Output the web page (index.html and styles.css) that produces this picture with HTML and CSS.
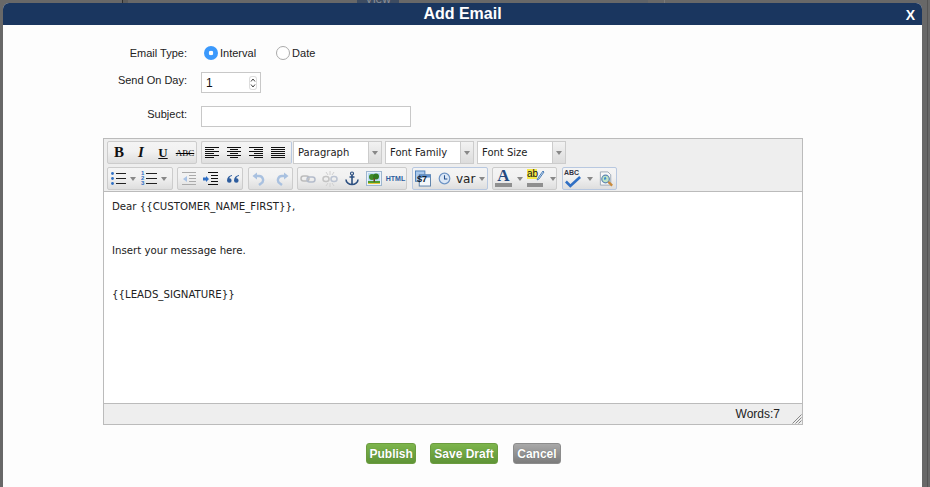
FILE: index.html
```html
<!DOCTYPE html>
<html lang="en">
<head>
    <meta charset="UTF-8">
    <meta name="viewport" content="width=device-width, initial-scale=1.0">
    <title>Add Email</title>
    <link rel="stylesheet" href="styles.css">
</head>
<body>
    <!-- page behind the overlay, only the top edge shows -->
    <div class="behind-line behind-line-a"></div>
    <div class="behind-btn">View</div>
    <div class="behind-patch"></div>
    <div class="behind-line behind-line-b"></div>
    <div class="behind-line behind-line-c"></div>

    <div class="modal">
        <div class="modal-head">
            <h1>Add Email</h1>
            <span class="close">X</span>
        </div>
        <form class="email-form">
            <div class="row row-type">
                <label>Email Type:</label>
                <div class="radios">
                    <span class="radio on"></span><span class="radio-text">Interval</span>
                    <span class="radio"></span><span class="radio-text">Date</span>
                </div>
            </div>
            <div class="row row-day">
                <label>Send On Day:</label>
                <div class="spin-input">
                    <span>1</span>
                    <span class="spinner">
                        <svg width="8" height="14" viewBox="0 0 8 14"><path d="M2 5.500 4 3l2 2.500M2 8.500 4 11l2-2.500" fill="none" stroke="#444" stroke-width="1"/></svg>
                    </span>
                </div>
            </div>
            <div class="row row-subject">
                <label>Subject:</label>
                <div class="text-input"></div>
            </div>

            <div class="editor">
                <div class="toolbar">
                    <div class="tool-row">
                        <div class="group g1">
                            <span class="tb tb-b">B</span>
                            <span class="tb tb-i">I</span>
                            <span class="tb tb-u">U</span>
                            <span class="tb tb-s">ABC</span>
                        </div>
                        <div class="group g2">
                            <span class="tb"><svg width="16" height="12" viewBox="0 0 16 12"><path d="M1 .5h14M1 2.500h9M1 4.500h14M1 6.500h9M1 8.500h14M1 10.500h9" stroke="#111"/></svg></span>
                            <span class="tb"><svg width="16" height="12" viewBox="0 0 16 12"><path d="M1 .5h14M4 2.500h8M1 4.500h14M4 6.500h8M1 8.500h14M4 10.500h8" stroke="#111"/></svg></span>
                            <span class="tb"><svg width="16" height="12" viewBox="0 0 16 12"><path d="M1 .5h14M6 2.500h9M1 4.500h14M6 6.500h9M1 8.500h14M6 10.500h9" stroke="#111"/></svg></span>
                            <span class="tb"><svg width="16" height="12" viewBox="0 0 16 12"><path d="M1 .5h14M1 2.500h14M1 4.500h14M1 6.500h14M1 8.500h14M1 10.500h14" stroke="#111"/></svg></span>
                        </div>
                        <div class="select"><span class="sel-text">Paragraph</span><span class="sel-arrow"></span></div>
                        <div class="select"><span class="sel-text">Font Family</span><span class="sel-arrow"></span></div>
                        <div class="select"><span class="sel-text">Font Size</span><span class="sel-arrow"></span></div>
                    </div>
                    <div class="tool-row">
                        <div class="group g3">
                            <span class="tb tb-wide">
                                <svg width="15" height="15" viewBox="0 0 15 15"><circle cx="1.500" cy="2.500" r="1.400" fill="#2f6fc4"/><circle cx="1.500" cy="7.500" r="1.400" fill="#2f6fc4"/><circle cx="1.500" cy="12.500" r="1.400" fill="#2f6fc4"/><path d="M5 2.500h10M5 7.500h10M5 12.500h10" stroke="#222"/></svg>
                            </span>
                            <span class="arrow"></span>
                            <span class="tb tb-wide">
                                <svg width="16" height="15" viewBox="0 0 16 15"><path d="M5 2.500h11M5 7.500h11M5 12.500h11" stroke="#222"/></svg>
                                <span class="nums">1<br>2<br>3</span>
                            </span>
                            <span class="arrow"></span>
                        </div>
                        <div class="group g4">
                            <span class="tb"><svg width="16" height="14" viewBox="0 0 16 14"><path d="M1 .5h14M8 3.500h7M8 6.500h7M8 9.500h7M1 12.500h14" stroke="#aaa"/><path d="M6 4 2 7l4 3z" fill="#a9c3e6"/></svg></span>
                            <span class="tb"><svg width="16" height="14" viewBox="0 0 16 14"><path d="M5 .5h10M8 3.500h7M8 6.500h7M8 9.500h7M5 12.500h10" stroke="#111"/><path d="M0 5.500h3V4l3 3-3 3V8.500H0z" fill="#2f6fc4"/></svg></span>
                            <span class="tb"><svg width="14" height="10" viewBox="0 0 14 10"><path d="M6 1C3 1.500 1 3.500 1 6.500a2.300 2.300 0 1 0 2.200-2.300C3.500 3 4.500 2.300 6 2zM13 1c-3 .5-5 2.500-5 5.500a2.300 2.300 0 1 0 2.200-2.300c.3-1.200 1.300-1.900 2.800-2.200z" fill="#2c5c9e"/></svg></span>
                        </div>
                        <div class="group g5">
                            <span class="tb tb-undo"><svg width="13" height="14" viewBox="0 0 13 14"><path d="M4 4h3a4 4 0 0 1 2 7.500L7 13" fill="none" stroke="#a9c1e0" stroke-width="2.400"/><path d="M5 .5v7L.5 4z" fill="#a9c1e0"/></svg></span>
                            <span class="tb"><svg width="13" height="14" viewBox="0 0 13 14"><g transform="matrix(-1 0 0 1 13 0)"><path d="M4 4h3a4 4 0 0 1 2 7.500L7 13" fill="none" stroke="#a9c1e0" stroke-width="2.400"/><path d="M5 .5v7L.5 4z" fill="#a9c1e0"/></g></svg></span>
                        </div>
                        <div class="group g6">
                            <span class="tb"><svg width="16" height="10" viewBox="0 0 16 10"><rect x="1" y="2" width="8" height="5" rx="2.500" fill="none" stroke="#bcbcbc" stroke-width="1.500"/><rect x="7" y="3" width="8" height="5" rx="2.500" fill="none" stroke="#b4bccb" stroke-width="1.500"/></svg></span>
                            <span class="tb"><svg width="16" height="16" viewBox="0 0 16 16"><rect x="1" y="5.500" width="6" height="5" rx="2.500" fill="none" stroke="#c4c4c4" stroke-width="1.500"/><rect x="9" y="5.500" width="6" height="5" rx="2.500" fill="none" stroke="#bcc4d2" stroke-width="1.500"/><path d="M8 0v4M8 12v4M4 1l2 3M12 1l-2 3M4 15l2-3M12 15l-2-3" stroke="#d0d0d0"/></svg></span>
                            <span class="tb"><svg width="14" height="15" viewBox="0 0 14 15"><circle cx="7" cy="2.500" r="1.500" fill="none" stroke="#2c4f80" stroke-width="1.200"/><path d="M7 4v9.500M4.500 6h5M1 8.500c0 3 3 5 6 5s6-2 6-5" fill="none" stroke="#2c4f80" stroke-width="1.600"/></svg></span>
                            <span class="tb"><svg width="16" height="15" viewBox="0 0 16 15"><rect x=".5" y=".5" width="15" height="14" fill="#e9f2fb" stroke="#9fb6cf"/><rect x="2" y="2" width="12" height="8" fill="#b9dcf5"/><rect x="2" y="10" width="12" height="3" fill="#4f9c2f"/><rect x="2" y="12" width="12" height="1" fill="#e6c53a"/><circle cx="6" cy="6" r="3" fill="#3f8a28"/><circle cx="10" cy="5.500" r="3" fill="#2f7a20"/><rect x="7.500" y="7" width="1.500" height="4" fill="#6b4a20"/></svg></span>
                            <span class="tb tb-html">HTML</span>
                        </div>
                        <div class="group g7">
                            <span class="tb tb-cal"><svg width="16" height="17" viewBox="0 0 17 17"><rect x=".5" y=".5" width="10" height="11" fill="#a9c8ec" stroke="#4d7fb8"/><rect x="4.500" y="4.500" width="12" height="12" fill="#f4f7fb" stroke="#5a7fa8"/><rect x="4.500" y="4.500" width="12" height="3" fill="#5d8fcb"/></svg><span class="cal-text">$7</span></span>
                            <span class="tb tb-clock"><svg width="13" height="13" viewBox="0 0 16 16"><circle cx="8" cy="8" r="6.500" fill="#dbe7f6" stroke="#6e94c4" stroke-width="1.500"/><path d="M8 4v4.500h3.500" fill="none" stroke="#24508c" stroke-width="1.300"/></svg></span>
                            <span class="var-text">var</span>
                            <span class="arrow arrow-var"></span>
                        </div>
                        <div class="group g8">
                            <span class="tb tb-color"><span class="color-a">A</span><span class="color-bar"></span></span>
                            <span class="arrow arrow-a"></span>
                            <span class="tb tb-mark">
                                <span class="color-ab">ab</span>
                                <svg class="pen" width="9" height="11" viewBox="0 0 9 11"><path d="M7 1 2 8l-1 2 2-1 5-7z" fill="#dbe7f6" stroke="#4d7fb8"/></svg>
                                <span class="color-bar"></span>
                            </span>
                            <span class="arrow"></span>
                        </div>
                        <div class="group g9">
                            <span class="tb tb-spell">
                                <span class="abc">ABC</span>
                                <svg width="16" height="12" viewBox="0 0 18 13"><path d="M1 6l5 5L17 1" fill="none" stroke="#2f6fc4" stroke-width="3"/></svg>
                            </span>
                            <span class="arrow arrow-spell"></span>
                            <span class="tb tb-doc"><svg width="17" height="18" viewBox="0 0 18 18"><path d="M2.500 1.500h8l3 3v11h-11z" fill="#f8f8f8" stroke="#9aa7b5"/><circle cx="8" cy="9" r="4" fill="#bfe3c4" stroke="#5e86b2" stroke-width="1.300"/><path d="M8 6.500c-2 .5-2 2.500-1 3.500l2-1z" fill="#3f8fd0"/><path d="M11 12l4 4" stroke="#c98a3c" stroke-width="2.400"/></svg></span>
                        </div>
                    </div>
                </div>
                <div class="edit-area">
                    <p>Dear {{CUSTOMER_NAME_FIRST}},</p>
                    <p>Insert your message here.</p>
                    <p>{{LEADS_SIGNATURE}}</p>
                </div>
                <div class="status-bar">
                    <span>Words:7</span>
                    <svg class="grip" width="11" height="11" viewBox="0 0 11 11"><path d="M10.500 1.500l-9 9M10.500 4.500l-6 6M10.500 7.500l-3 3" stroke="#888" fill="none"/></svg>
                </div>
            </div>

            <div class="actions">
                <button type="button" class="btn btn-green">Publish</button>
                <button type="button" class="btn btn-green btn-draft">Save Draft</button>
                <button type="button" class="btn btn-gray">Cancel</button>
            </div>
        </form>
    </div>
</body>
</html>
```
FILE: styles.css
```css
* {
    box-sizing: border-box;
}
html, body {
    height: 100%;
}
body {
    margin: 0;
    padding: 3px 8px 0 3px;
    background: #686868;
    font-family: "Liberation Sans", Arial, sans-serif;
    overflow: hidden;
    position: relative;
}

/* bits of the page under the overlay */
.behind-line {
    position: absolute;
    top: 0;
    height: 3px;
    width: 1px;
    background: #333;
}
.behind-line-a {
    left: 122px;
    width: 6px;
    background: #5c5c5c;
    border-left: 1px solid #2e2e2e;
}
.behind-line-b {
    left: 664px;
    background: #7a7a7a;
}
.behind-line-c {
    left: 927px;
    height: 100%;
    background: #545454;
}
.behind-patch {
    position: absolute;
    top: 0;
    left: 630px;
    width: 18px;
    height: 3px;
    background: #5f6368;
}
.behind-btn {
    position: absolute;
    top: -8px;
    left: 357px;
    width: 42px;
    height: 11px;
    background: #3d4c61;
    color: #8a8f98;
    font-size: 12px;
    text-align: center;
}

.modal {
    position: relative;
    height: 100%;
    background: #fdfdfd;
    border-radius: 6px 6px 0 0;
}
.modal-head {
    height: 22px;
    background: #1a365f;
    border-radius: 6px 6px 0 0;
    color: #fff;
    display: flex;
    align-items: center;
    justify-content: center;
    position: relative;
}
h1 {
    margin: 0;
    font-size: 16px;
    font-weight: bold;
    line-height: 22px;
}
.close {
    position: absolute;
    right: 7px;
    top: 4px;
    font-size: 14px;
    font-weight: bold;
    line-height: 16px;
}

.email-form {
    padding-left: 100px;
}
.row {
    display: grid;
    grid-template-columns: 84px auto;
    column-gap: 14px;
    justify-content: start;
    font-size: 11px;
    color: #222;
}
.row label {
    text-align: right;
}
.row-type {
    padding-top: 20px;
    height: 42px;
    line-height: 16px;
}
.row-day {
    height: 39px;
    padding-top: 5px;
}
.row-day label {
    padding-top: 1px;
    line-height: 14px;
}
.row-subject {
    height: 32px;
}
.row-subject label {
    line-height: 15px;
    padding-top: 1px;
}
.radios {
    display: flex;
    align-items: center;
    align-self: start;
    height: 16px;
    margin-left: 3px;
}
.radio {
    width: 14px;
    height: 14px;
    border-radius: 50%;
    border: 1px solid #aaa;
    background: #fff;
}
.radio.on {
    border: 0;
    background: radial-gradient(circle, #fff 0 2px, #3b99fc 2.6px);
}
.radio-text {
    margin-left: 2px;
    margin-right: 20px;
    line-height: 18px;
}
.spin-input {
    width: 60px;
    height: 21px;
    border: 1px solid #c8c8c8;
    background: #fff;
    padding-left: 4px;
    font-size: 12px;
    line-height: 20px;
    display: flex;
    justify-content: space-between;
    align-items: center;
    color: #111;
}
.spinner {
    display: flex;
    width: 8px;
    height: 14px;
    margin-right: 3px;
    border-radius: 3px;
    box-shadow: inset 0 0 0 1px #ddd;
}
.text-input {
    width: 210px;
    height: 21px;
    border: 1px solid #c8c8c8;
    background: #fff;
}

.editor {
    width: 700px;
    height: 287px;
    border: 1px solid #bbb;
    display: flex;
    flex-direction: column;
}
.toolbar {
    height: 53px;
    background: #eee;
    border-bottom: 1px solid #bbb;
    padding: 2px 0 0 3px;
}
.tool-row {
    display: flex;
    height: 23px;
    margin-bottom: 3px;
}
.group {
    display: flex;
    align-items: center;
    height: 23px;
    flex: none;
    margin-right: 4px;
    border: 1px solid #ccc;
    border-radius: 2px;
    background: linear-gradient(#f4f4f4, #f1f1f1 45%, #dedede);
}
.tb {
    position: relative;
    width: 22px;
    height: 21px;
    flex: none;
    display: flex;
    align-items: center;
    justify-content: center;
    color: #111;
}
.g1 { width: 90px; }
.g2 { width: 91px; margin-right: 1px; border-right-color: #b8c8e0; }
.g2 .tb:first-child { margin-left: -1px; }
.g3 { width: 66px; }
.g4 { width: 66px; }
.g5 { width: 45px; }
.g6 { width: 110px; }
.g6 .tb:first-child { margin-left: -1px; }
.g7 { width: 76px; border-color: #b8c8e0; }
.g8 { width: 65px; margin-right: 5px; }
.g9 { width: 55px; border-color: #b8c8e0; }
.g4, .g6 { margin-right: 5px; }
.tb-b {
    font: bold 15px "Liberation Serif", serif;
}
.tb-i {
    font: italic bold 15px "Liberation Serif", serif;
}
.tb-u {
    font: bold 13px "Liberation Serif", serif;
    text-decoration: underline;
}
.tb-s {
    font: 9px "Liberation Serif", serif;
    color: #000;
    text-decoration: line-through;
}
.tb-wide {
    width: 20px;
}
.tb-undo {
    justify-content: flex-start;
    padding-left: 3px;
}
.tb-html {
    font: bold 7px "Liberation Sans", sans-serif;
    color: #2c5c9e;
    width: 21px;
}
.nums {
    position: absolute;
    left: 2px;
    top: 3px;
    font: bold 6px/5px "Liberation Sans", sans-serif;
    color: #2f6fc4;
}
.arrow {
    width: 0;
    height: 0;
    flex: none;
    margin: 0 3px 0 2px;
    border: 3px solid transparent;
    border-top: 4px solid #888;
    border-bottom: 0;
}
.arrow-var {
    margin-left: 4px;
}
.arrow-a {
    margin-left: 3px;
}
.arrow-spell {
    margin-left: 4px;
}
.tb-cal {
    width: 20px;
}
.tb-clock {
    width: 23px;
}
.cal-text {
    position: absolute;
    left: 4px;
    top: 6px;
    font: bold 9px "Liberation Sans", sans-serif;
    color: #123;
}
.var-text {
    font: 12px "DejaVu Sans", sans-serif;
    color: #222;
}
.tb-color {
    display: block;
    width: 21px;
}
.tb-mark {
    display: block;
}
.color-a {
    display: block;
    margin-top: 1px;
    font: bold 17px/13px "Liberation Serif", serif;
    color: #24497f;
    text-align: center;
}
.color-bar {
    position: absolute;
    left: 2px;
    right: 2px;
    bottom: 2px;
    height: 4px;
    background: #8f8f8f;
}
.tb-mark .color-bar {
    left: 1px;
    right: 5px;
}
.color-ab {
    position: absolute;
    left: 1px;
    top: 1px;
    width: 10px;
    background: #f5e94a;
    font: 10px/10px "Liberation Sans", sans-serif;
    color: #111;
}
.pen {
    position: absolute;
    left: 10px;
    top: 2px;
}
.tb-spell {
    width: 20px;
}
.abc {
    position: absolute;
    left: 1px;
    top: 0;
    font: bold 7px/9px "Liberation Sans", sans-serif;
    color: #334;
}
.tb-spell svg {
    margin-top: 6px;
}
.tb-doc {
    width: 20px;
}
.select {
    display: flex;
    height: 23px;
    width: 89px;
    margin-right: 3px;
    border: 1px solid #ccc;
    background: #fff;
    flex: none;
}
.sel-text {
    flex: 1;
    padding-left: 4px;
    font: 10px/21px "DejaVu Sans", sans-serif;
    color: #222;
}
.sel-arrow {
    width: 13px;
    border-left: 1px solid #ccc;
    background: linear-gradient(#f2f2f2, #dcdcdc);
    position: relative;
}
.sel-arrow::after {
    content: "";
    position: absolute;
    left: 3px;
    top: 9px;
    border: 3px solid transparent;
    border-top: 4px solid #888;
    border-bottom: 0;
}
.edit-area {
    flex: 1;
    background: #fff;
    padding: 8px 8px 0;
    font: 10.2px/14px "DejaVu Sans", Verdana, sans-serif;
    color: #222;
}
.edit-area p {
    margin: 0 0 30px;
}
.status-bar {
    height: 21px;
    background: #eee;
    border-top: 1px solid #bbb;
    font-size: 12px;
    line-height: 20px;
    color: #222;
    text-align: right;
    padding-right: 22px;
    position: relative;
}
.grip {
    position: absolute;
    right: 0;
    bottom: 0;
}

.actions {
    width: 700px;
    padding: 18px 0 0 263px;
    display: flex;
    gap: 15px;
}
.btn {
    height: 21px;
    padding: 0 2.5px;
    border: 1px solid #6b9c3f;
    border-radius: 3px;
    color: #fff;
    font: bold 12px/18px "Liberation Sans", Arial, sans-serif;
    text-shadow: 0 0 1px rgba(0, 0, 0, .3);
}
.btn-green {
    background: linear-gradient(#7db54c, #5f9437);
}
.btn-draft {
    margin-left: -1px;
    padding: 0 3px;
}
.btn-gray {
    padding: 0 3.500px;
    background: linear-gradient(#a9a9a9, #7c7c7c);
    border-color: #8c8c8c;
}
```
